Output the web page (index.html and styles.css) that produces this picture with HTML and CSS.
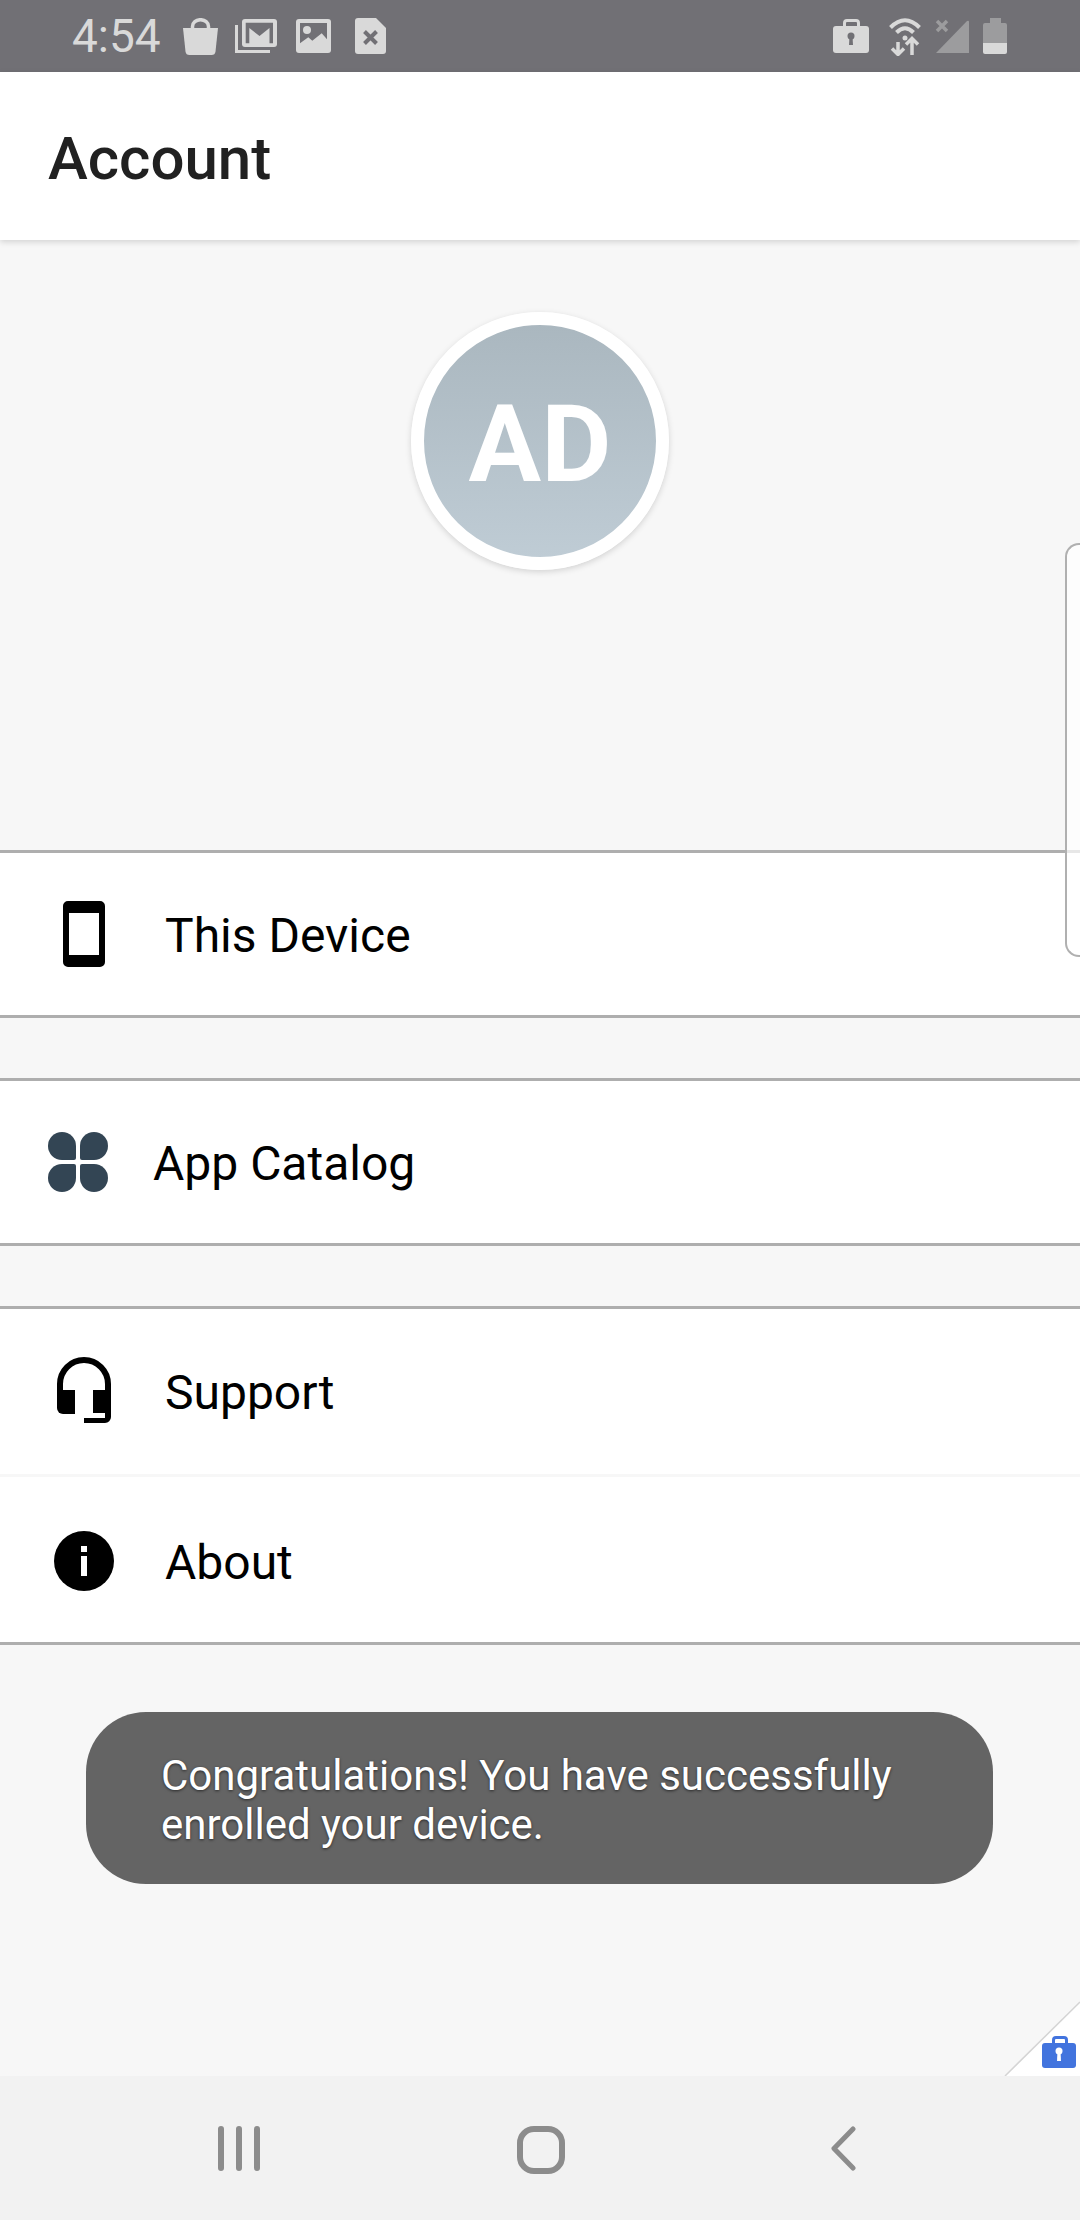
FILE: index.html
```html
<!DOCTYPE html>
<html>
<head>
    <title>Account</title>
    <link rel="stylesheet" href="styles.css">
</head>
<body>
    <div class="status-bar">
        <span class="time">4:54</span>
        <svg class="st-icon bag" width="35" height="37" viewBox="0 0 35 37">
            <path d="M9.500 11V8.500a8 6.800 0 0 1 16 0V11" fill="none" stroke="#d9d9d9" stroke-width="3.500"/>
            <path d="M0 10h35l-2.500 23.500q-.5 3.500-4 3.500H6.500q-3.500 0-4-3.500Z" fill="#d9d9d9"/>
        </svg>
        <svg class="st-icon mail" width="42" height="35" viewBox="0 0 42 35">
            <path d="M1.500 6V32.500H35" fill="none" stroke="#d9d9d9" stroke-width="3"/>
            <rect x="7" width="35" height="28" rx="3" fill="#d9d9d9"/>
            <path d="M10.700 3.700H38V24.300H34.500V9L24.500 17L14.300 9V24.300H10.700Z" fill="#717075"/>
        </svg>
        <svg class="st-icon picture" width="35" height="34" viewBox="0 0 35 34">
            <rect width="35" height="34" rx="3" fill="#d9d9d9"/>
            <path d="M4 4H31V20.300L25.700 14.300L16.300 21.700L12.300 18.300L4 24.300Z" fill="#717075"/>
            <circle cx="11" cy="11" r="4" fill="#d9d9d9"/>
        </svg>
        <svg class="st-icon sim" width="31" height="36" viewBox="0 0 31 36">
            <path d="M3 0H21L31 10V33a3 3 0 0 1-3 3H3a3 3 0 0 1-3-3V3a3 3 0 0 1 3-3Z" fill="#d9d9d9"/>
            <path d="M9.500 13.500l12 12M21.500 13.500l-12 12" stroke="#717075" stroke-width="4"/>
        </svg>
        <div class="spacer"></div>
        <svg class="st-icon" width="36" height="34" viewBox="0 0 36 34">
            <path d="M11.500 8V4q0-2.500 2.500-2.500h9q2.500 0 2.500 2.500V8" fill="none" stroke="#d9d9d9" stroke-width="3"/>
            <rect y="7" width="36" height="27" rx="3" fill="#d9d9d9"/>
            <circle cx="18" cy="17" r="3.500" fill="#717075"/>
            <path d="M16.500 17h3l.5 9h-4Z" fill="#717075"/>
        </svg>
        <svg class="st-icon wifi" width="32" height="40" viewBox="0 0 32 40">
            <path d="M1.500 11.500Q16-3 30.500 11.500M7.500 16.500Q16 8 24.500 16.500" fill="none" stroke="#d9d9d9" stroke-width="4"/>
            <circle cx="16" cy="22" r="2.500" fill="#d9d9d9"/>
            <path d="M9 26V38M3 32.500L9 38.500L15 32.500M23 23V39M17 28.500L23 22.500L29 28.500" fill="none" stroke="#d9d9d9" stroke-width="3.500"/>
        </svg>
        <svg class="st-icon signal" width="35" height="36" viewBox="0 0 35 36">
            <path d="M1 35L32 3q2-1 2 1V35Z" fill="#9c9c9e"/>
            <path d="M2 3l10 10M12 3L2 13" stroke="#9c9c9e" stroke-width="3.500"/>
        </svg>
        <svg class="st-icon battery" width="24" height="36" viewBox="0 0 24 36">
            <path d="M7 0H18V5H22a2 2 0 0 1 2 2V25H0V7a2 2 0 0 1 2-2H7Z" fill="#9c9c9e"/>
            <path d="M0 25H24V34a2 2 0 0 1-2 2H2a2 2 0 0 1-2-2Z" fill="#d9d9d9"/>
        </svg>
    </div>

    <div class="app-header">
        <h1 class="page-title">Account</h1>
    </div>

    <div class="content">
        <div class="profile">
            <div class="avatar">AD</div>
        </div>

        <div class="group">
            <div class="row">
                <svg class="row-icon" width="60" height="66" viewBox="0 0 60 66">
                    <path fill-rule="evenodd" d="M14 0H46a5 5 0 0 1 5 5V61a5 5 0 0 1-5 5H14a5 5 0 0 1-5-5V5a5 5 0 0 1 5-5ZM15 12V54H45V12Z"/>
                </svg>
                <span class="row-label">This Device</span>
            </div>
        </div>

        <div class="group">
            <div class="row row-catalog">
                <div class="petals">
                    <div class="petal p1"></div>
                    <div class="petal p2"></div>
                    <div class="petal p3"></div>
                    <div class="petal p4"></div>
                </div>
                <span class="row-label">App Catalog</span>
            </div>
        </div>

        <div class="group">
            <div class="row row-tall">
                <svg class="row-icon headset" width="60" height="66" viewBox="-3 0 60 66">
                    <path d="M3 36V27a24 24 0 0 1 48 0V36" fill="none" stroke="#000" stroke-width="6"/>
                    <path d="M0 33H18V57H6a6 6 0 0 1-6-6Z"/>
                    <path d="M36 33H54V56H36Z"/>
                    <path d="M48 50h6v10a6 6 0 0 1-6 6H27V61H48Z"/>
                </svg>
                <span class="row-label">Support</span>
            </div>
            <div class="row row-tall row-split">
                <svg class="row-icon" width="60" height="60" viewBox="0 0 60 60">
                    <circle cx="30" cy="30" r="30"/>
                    <rect x="27" y="15" width="6" height="6" fill="#fff"/>
                    <rect x="27" y="25" width="6" height="20" fill="#fff"/>
                </svg>
                <span class="row-label">About</span>
            </div>
        </div>

        <div class="toast">Congratulations! You have successfully enrolled your device.</div>
    </div>

    <div class="nav-bar">
        <svg width="48" height="45" viewBox="0 0 48 45" class="nav-recents">
            <path d="M6 3V42M24 3V42M42 3V42" fill="none" stroke="#8c8c8c" stroke-width="6" stroke-linecap="round"/>
        </svg>
        <svg width="48" height="48" viewBox="0 0 48 48" class="nav-home">
            <rect x="3" y="3" width="42" height="42" rx="14" fill="none" stroke="#8c8c8c" stroke-width="6"/>
        </svg>
        <svg width="26" height="45" viewBox="0 0 26 45" class="nav-back">
            <path d="M23 3L4 22.500L23 42" fill="none" stroke="#8c8c8c" stroke-width="5" stroke-linecap="round" stroke-linejoin="round"/>
        </svg>
    </div>

    <div class="side-handle"></div>

    <svg class="corner-badge" width="80" height="80" viewBox="0 0 80 80">
        <path d="M5 80L80 6V80Z" fill="#fff"/>
        <path d="M5 80L80 6" fill="none" stroke="#d4d4d4" stroke-width="1.500"/>
        <path d="M53.500 48V44q0-2.500 2.500-2.500h8q2.500 0 2.500 2.500V48" fill="none" stroke="#4274de" stroke-width="3"/>
        <rect x="42" y="47" width="34" height="25" rx="3" fill="#4274de"/>
        <circle cx="59" cy="55" r="3.500" fill="#fff"/>
        <path d="M57.500 55h3l.5 10h-4Z" fill="#fff"/>
    </svg>
</body>
</html>
```

FILE: styles.css
```css
html, body {
    margin: 0;
    padding: 0;
}
body {
    position: relative;
    display: flex;
    flex-direction: column;
    width: 1080px;
    height: 2220px;
    overflow: hidden;
    background-color: #f7f7f7;
    font-family: Roboto, sans-serif;
    color: #000;
}
.status-bar {
    display: flex;
    align-items: center;
    flex: none;
    height: 72px;
    padding: 0 73px 0 72px;
    background-color: #717075;
    box-sizing: border-box;
}
.time {
    font-size: 46px;
    color: #d9d9d9;
    margin-right: 22px;
}
.st-icon {
    flex: none;
}
.mail {
    margin-left: 17px;
}
.picture {
    margin-left: 19px;
}
.sim {
    margin-left: 24px;
}
.spacer {
    flex: 1;
}
.wifi {
    margin-left: 20px;
}
.signal {
    margin-left: 14px;
}
.battery {
    margin-left: 13px;
}
.app-header {
    position: relative;
    display: flex;
    align-items: center;
    flex: none;
    height: 168px;
    padding: 4px 0 0 48px;
    box-sizing: border-box;
    background-color: #fff;
    box-shadow: 0 2px 6px rgba(0, 0, 0, 0.15);
}
.page-title {
    margin: 0;
    font-size: 60px;
    font-weight: 500;
    color: #212121;
}
.content {
    flex: 1;
}
.profile {
    display: flex;
    justify-content: center;
    height: 610px;
    padding-top: 72px;
    box-sizing: border-box;
}
.avatar {
    display: flex;
    align-items: center;
    justify-content: center;
    width: 258px;
    height: 258px;
    padding-top: 6px;
    border: 13px solid #fff;
    border-radius: 50%;
    box-sizing: border-box;
    background: linear-gradient(#a9b6be, #c0cdd6);
    background-origin: border-box;
    box-shadow: 0 2px 6px rgba(0, 0, 0, 0.15);
    color: #fff;
    font-size: 108px;
    font-weight: 700;
}
.group {
    margin-bottom: 60px;
    background-color: #fff;
    border-top: 3px solid #aeaeae;
    border-bottom: 3px solid #aeaeae;
}
.group:last-of-type {
    margin-bottom: 0;
}
.row {
    display: flex;
    align-items: center;
    height: 162px;
    padding-left: 54px;
}
.row-tall {
    height: 165px;
}
.row-split {
    height: 162px;
    padding-top: 3px;
    border-top: 3px solid #f7f7f7;
}
.row-icon {
    flex: none;
    margin-right: 51px;
}
.headset {
    margin-bottom: 3px;
}
.row-label {
    padding-top: 2px;
    font-size: 48px;
}
.row-catalog {
    padding-left: 48px;
}
.petals {
    display: grid;
    grid-template-columns: 28px 28px;
    grid-template-rows: 28px 28px;
    gap: 4px;
    flex: none;
    margin-right: 45px;
}
.petal {
    background-color: #334554;
    border-radius: 14px;
}
.p1 {
    border-bottom-right-radius: 2px;
}
.p2 {
    border-bottom-left-radius: 2px;
}
.p3 {
    border-top-right-radius: 2px;
}
.p4 {
    border-top-left-radius: 2px;
}
.toast {
    height: 172px;
    margin: 67px 87px 0 86px;
    padding: 39px 80px 0 75px;
    box-sizing: border-box;
    background-color: #646464;
    border-radius: 60px;
    color: #fff;
    font-size: 42px;
    line-height: 49px;
    text-shadow: 0 1px 3px rgba(0, 0, 0, 0.6);
}
.nav-bar {
    position: relative;
    flex: none;
    height: 144px;
    background-color: #f2f2f2;
}
.nav-recents {
    position: absolute;
    left: 215px;
    top: 50px;
}
.nav-home {
    position: absolute;
    left: 517px;
    top: 50px;
}
.nav-back {
    position: absolute;
    left: 830px;
    top: 50px;
}
.side-handle {
    position: absolute;
    left: 1065px;
    top: 543px;
    width: 15px;
    height: 414px;
    border: 2px solid #b0b0b0;
    border-right: none;
    border-radius: 14px 0 0 14px;
    box-sizing: border-box;
    background-color: rgba(255, 255, 255, 0.7);
}
.corner-badge {
    position: absolute;
    right: 0;
    top: 1996px;
}
```
